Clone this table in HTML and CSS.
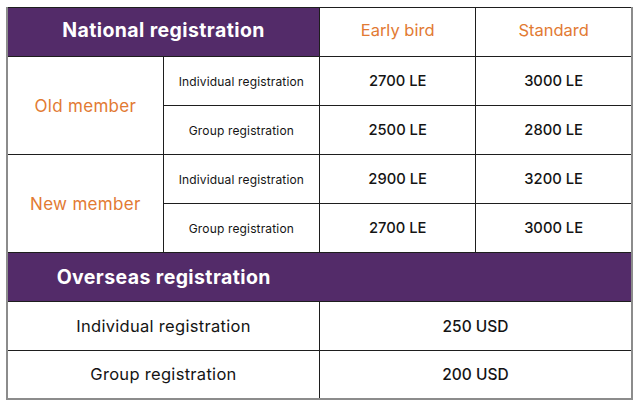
FILE: index.html
```html
<!DOCTYPE html>
<html>
<head>
<meta charset="utf-8">
<link rel="stylesheet" href="styles.css">
</head>
<body>
<table class="fees">
  <colgroup><col class="c"><col class="c"><col class="c"><col class="c"></colgroup>
  <tr class="row top">
    <th class="head" colspan="2">National registration</th>
    <th class="plan">Early bird</th>
    <th class="plan">Standard</th>
  </tr>
  <tr class="row">
    <td class="member" rowspan="2">Old member</td>
    <td class="type">Individual registration</td>
    <td class="price">2700 LE</td>
    <td class="price">3000 LE</td>
  </tr>
  <tr class="row">
    <td class="type">Group registration</td>
    <td class="price">2500 LE</td>
    <td class="price">2800 LE</td>
  </tr>
  <tr class="row">
    <td class="member" rowspan="2">New member</td>
    <td class="type">Individual registration</td>
    <td class="price">2900 LE</td>
    <td class="price">3200 LE</td>
  </tr>
  <tr class="row">
    <td class="type">Group registration</td>
    <td class="price">2700 LE</td>
    <td class="price">3000 LE</td>
  </tr>
  <tr class="row">
    <th class="head head-left" colspan="2">Overseas registration</th>
    <th class="head head-right" colspan="2"></th>
  </tr>
  <tr class="row">
    <td class="over" colspan="2">Individual registration</td>
    <td class="usd" colspan="2">250 USD</td>
  </tr>
  <tr class="row last">
    <td class="over" colspan="2">Group registration</td>
    <td class="usd" colspan="2">200 USD</td>
  </tr>
</table>
</body>
</html>
```
FILE: styles.css
```css
html, body {
  margin: 0;
  padding: 0;
  background: #ffffff;
}
body {
  padding: 7px 0 0 6px;
  font-family: Inter, "Open Sans", sans-serif;
  color: #141414;
}
.fees {
  width: 627px;
  table-layout: fixed;
  border-collapse: collapse;
  border-left: 2px solid #8c8c8c;
  border-right: 2px solid #8c8c8c;
  border-bottom: 2px solid #8c8c8c;
}
.c { width: 25%; }
.row { height: 49px; }
.row.last { height: 48px; }
.fees th, .fees td {
  border: 1px solid #1e1e1e;
  padding: 0;
  text-align: center;
  vertical-align: middle;
}
.top th { padding-bottom: 4px; }
.head {
  background: #532b69;
  color: #ffffff;
  font-size: 19.5px;
  font-weight: 700;
  letter-spacing: 0.4px;
}
.head-left { border-right: none !important; }
.head-right { border-left: none !important; }
.plan {
  color: #e27a33;
  font-size: 16.5px;
  font-weight: 400;
}
.member {
  color: #e27a33;
  font-size: 17px;
  font-weight: 400;
  letter-spacing: 0.3px;
}
.type {
  font-size: 12px;
  font-weight: 400;
  letter-spacing: 0.15px;
}
.price {
  font-size: 14.75px;
  font-weight: 500;
}
.over {
  font-size: 16.5px;
  font-weight: 400;
  letter-spacing: 0.3px;
}
.usd {
  font-size: 15.5px;
  font-weight: 500;
}
```
